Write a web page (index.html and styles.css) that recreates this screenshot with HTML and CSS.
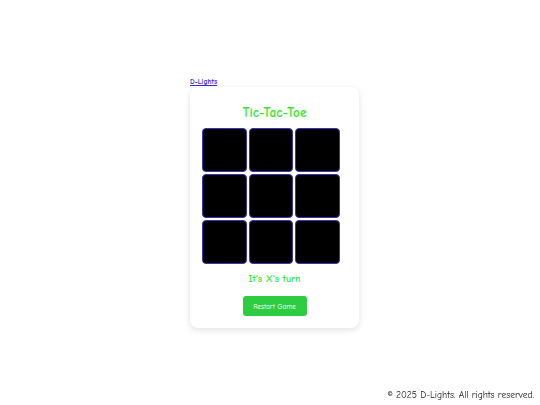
FILE: index.html
```html
<!DOCTYPE html>
<html lang="en">
<head>
<meta charset="utf-8">
<title>Tic-Tac-Toe</title>
<link rel="stylesheet" href="styles.css">
</head>
<body>
<main class="page">
  <div class="wrap">
    <a class="brand" href="#">D-Lights</a>
    <section class="card">
      <h1 class="title">Tic-Tac-Toe</h1>
      <div class="board">
        <div class="cell"></div><div class="cell"></div><div class="cell"></div>
        <div class="cell"></div><div class="cell"></div><div class="cell"></div>
        <div class="cell"></div><div class="cell"></div><div class="cell"></div>
      </div>
      <p class="status">It's X's turn</p>
      <button class="restart">Restart Game</button>
    </section>
  </div>
</main>
<footer class="footer">© 2025 D-Lights. All rights reserved.</footer>
</body>
</html>
```

FILE: styles.css
```css
html, body {
  margin: 0;
  height: 100%;
  background: #ffffff;
  font-family: "Comic Sans MS", "Comic Neue", cursive;
}
.page {
  height: 100%;
  box-sizing: border-box;
  padding-left: 9px;
  display: flex;
  align-items: center;
  justify-content: center;
}
.wrap {
  display: flex;
  flex-direction: column;
  align-items: flex-start;
}
.brand {
  font-size: 7.5px;
  line-height: 10px;
  color: #3030d8;
  font-weight: bold;
  text-decoration: underline;
}
.card {
  width: 169px;
  box-sizing: border-box;
  background: #fff;
  border-radius: 8px;
  box-shadow: 0 2px 6px rgba(0,0,0,0.12);
  padding: 17px 12px 12px;
  display: flex;
  flex-direction: column;
  align-items: center;
}
.title {
  margin: 0;
  font-size: 13.3px;
  line-height: 18px;
  color: #33e633;
  font-weight: bold;
}
.board {
  align-self: flex-start;
  margin-top: 6px;
  display: grid;
  grid-template-columns: repeat(3, 44.5px);
  grid-auto-rows: 44px;
  gap: 2px;
}
.cell {
  background: #000;
  border: 1px solid #3d33b0;
  border-radius: 4px;
}
.status {
  margin: 8px 0 0;
  font-size: 10px;
  line-height: 14px;
  font-weight: bold;
  color: #33e633;
}
.restart {
  margin-top: 10px;
  width: 64px;
  height: 20px;
  border: none;
  border-radius: 3px;
  background: #2ecc40;
  color: #fff;
  font-family: inherit;
  font-size: 7.3px;
  padding: 0;
}
.footer {
  position: fixed;
  right: 6px;
  bottom: 4px;
  font-size: 9.6px;
  line-height: 12px;
  color: #222;
}
```
